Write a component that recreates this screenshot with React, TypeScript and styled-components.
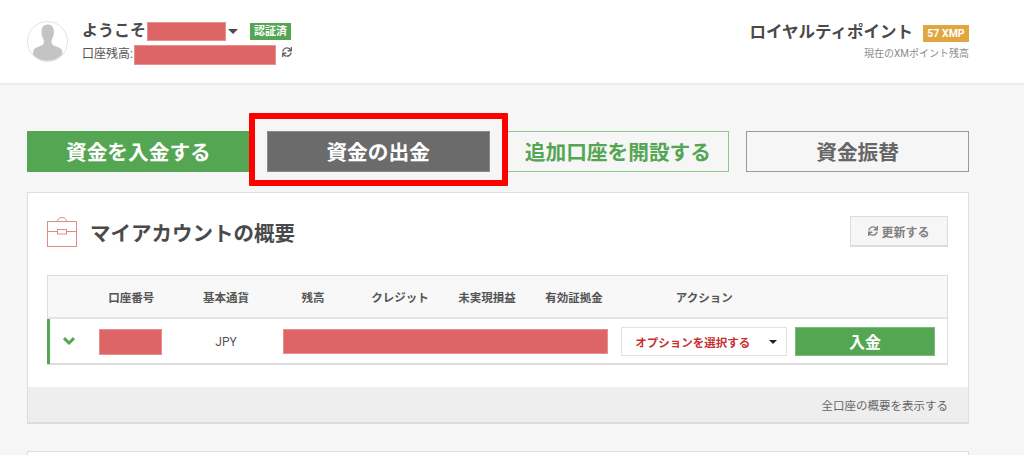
import React from "react"
import styled, { createGlobalStyle } from "styled-components"
import { FaSync } from "react-icons/fa"

const GlobalStyle = createGlobalStyle`
    html, body {
        margin: 0;
        height: 455px;
        overflow: hidden;
        background: #f6f6f6;
        font-family: Roboto, "Noto Sans CJK JP", "Liberation Sans", sans-serif;
        color: #4a4a4a;
    }
    * { box-sizing: border-box; }
`

const Header = styled.header`
    height: 85px;
    background: #fff;
    border-bottom: 2px solid #ececec;
    display: flex;
    justify-content: space-between;
    padding: 21px 55px 0 27px;
`

const User = styled.div`
    display: flex;
    gap: 14px;
`

const Avatar = styled.svg`
    width: 41px;
    height: 41px;
    display: block;
`

const UserLines = styled.div`
    display: flex;
    flex-direction: column;
    gap: 4px;
`

const Line = styled.div`
    display: flex;
    align-items: center;
`

const Welcome = styled.span`
    font-size: 16px;
    line-height: 20px;
    font-weight: 700;
    margin-right: 1px;
`

const Redacted = styled.div<{ $w: number; $h: number }>`
    width: ${(p) => p.$w}px;
    height: ${(p) => p.$h}px;
    background: #dd6565;
    border: 1px solid #e88f8f;
    flex-shrink: 0;
`

const Caret = styled.span<{ $color?: string }>`
    width: 0;
    height: 0;
    border-left: 5px solid transparent;
    border-right: 5px solid transparent;
    border-top: 5px solid ${(p) => p.$color || "#4a4a4a"};
`

const UserCaret = styled(Caret)`
    margin: 0 12px 0 2px;
`

const VerifiedBadge = styled.span`
    width: 41px;
    height: 17px;
    background: #55a653;
    color: #fff;
    font-size: 11px;
    font-weight: 700;
    line-height: 17px;
    text-align: center;
`

const BalanceLabel = styled.span`
    font-size: 12px;
    line-height: 18px;
    width: 52px;
    color: #555;
    align-self: flex-start;
`

const BalanceRefresh = styled(FaSync)`
    width: 10px;
    height: 10px;
    color: #666;
    margin-left: 6px;
    margin-top: -6px;
`

const Loyalty = styled.div`
    display: flex;
    flex-direction: column;
    align-items: flex-end;
    padding-top: 3px;
`

const LoyaltyTitle = styled.div`
    display: flex;
    align-items: center;
    gap: 10px;
    font-size: 16.5px;
    line-height: 18px;
    font-weight: 700;
`

const PointsBadge = styled.span`
    width: 46px;
    height: 17px;
    background: #dfa641;
    color: #fff;
    font-size: 10.5px;
    font-weight: 700;
    line-height: 17px;
    text-align: center;
`

const LoyaltySub = styled.div`
    font-size: 10px;
    line-height: 14px;
    color: #8c8c8c;
    margin-top: 5px;
`

const Main = styled.main`
    padding: 46px 55px 0 27px;
`

const ButtonRow = styled.div`
    position: relative;
    display: grid;
    grid-template-columns: repeat(4, 1fr);
    gap: 17px;
`

const BigButton = styled.button<{ $variant: "green" | "gray" | "greenLine" | "grayLine" }>`
    height: 41px;
    padding: 0 0 2px;
    font-family: inherit;
    font-size: 20.7px;
    font-weight: 700;
    cursor: pointer;
    background: ${(p) =>
        p.$variant === "green" ? "#55a653" : p.$variant === "gray" ? "#6b6b6b" : "transparent"};
    color: ${(p) =>
        p.$variant === "green" || p.$variant === "gray" ? "#fff" : p.$variant === "greenLine" ? "#55a653" : "#666"};
    border: 1px solid
        ${(p) =>
            p.$variant === "green"
                ? "#55a653"
                : p.$variant === "gray"
                  ? "#8a8a8a"
                  : p.$variant === "greenLine"
                    ? "#8fc58e"
                    : "#999"};
`

const Highlight = styled.div`
    position: absolute;
    left: 222px;
    top: -18px;
    width: 259px;
    height: 73px;
    border: 6px solid #ff0000;
    border-radius: 1px;
    pointer-events: none;
`

const Panel = styled.section`
    margin-top: 20px;
    height: 232px;
    background: #fff;
    border: 1px solid #ddd;
    border-bottom-width: 2px;
    display: flex;
    flex-direction: column;
`

const PanelHead = styled.div`
    display: flex;
    justify-content: space-between;
    align-items: center;
    height: 31px;
    margin: 23px 20px 0 19px;
`

const PanelTitle = styled.h2`
    display: flex;
    align-items: center;
    gap: 13px;
    margin: 0;
    font-size: 20.5px;
    font-weight: 700;
`

const CaseIcon = styled.svg`
    width: 30px;
    height: 30px;
    display: block;
`

const UpdateButton = styled.button`
    width: 98px;
    height: 31px;
    display: flex;
    align-items: center;
    justify-content: center;
    gap: 3px;
    padding: 0;
    background: #f6f6f6;
    border: 1px solid #dcdcdc;
    border-width: 1px 1px 2px 1px;
    color: #808080;
    font-family: inherit;
    font-size: 12px;
    font-weight: 700;
    svg {
        width: 10px;
        height: 10px;
    }
`

const Table = styled.div`
    margin: 28px 20px 0 19px;
    height: 90px;
    border: 1px solid #ddd;
    border-bottom-width: 2px;
`

const HeadRow = styled.div`
    height: 43px;
    background: #f8f8f8;
    border-bottom: 2px solid #e4e4e4;
    display: grid;
    grid-template-columns: 32px 102.5px repeat(5, 87px) 173.5px 1fr;
    align-items: center;
    text-align: center;
    font-size: 11.5px;
    font-weight: 700;
    color: #555;
`

const DataRow = styled.div`
    height: 45px;
    margin-left: -1px;
    border-left: 3px solid #55a653;
    display: grid;
    grid-template-columns: 30px 102.5px repeat(5, 87px) 173.5px 1fr;
    align-items: center;
    font-size: 12px;
    color: #555;
`

const Chevron = styled.svg`
    width: 12px;
    height: 8px;
    display: block;
    margin-left: 13px;
    margin-top: -1px;
`

const AccountCell = styled.div`
    padding-left: 19px;
`

const CurrencyCell = styled.div`
    text-align: center;
`

const WideCell = styled.div`
    grid-column: span 4;
    padding-left: 13px;
`

const Select = styled.div`
    width: 166px;
    height: 29px;
    justify-self: center;
    background: #fff;
    border: 1px solid #e2e2e2;
    display: flex;
    align-items: center;
    justify-content: space-between;
    padding: 0 9px 0 13px;
    color: #c93030;
    font-size: 11.5px;
    font-weight: 700;
`

const SelectCaret = styled(Caret)`
    border-left-width: 4px;
    border-right-width: 4px;
    border-top-width: 4px;
`

const DepositButton = styled.button`
    width: 140px;
    height: 29px;
    margin-left: 4px;
    padding: 0 0 2px;
    background: #55a653;
    border: 1px solid #7abb78;
    color: #fff;
    font-family: inherit;
    font-size: 16px;
    font-weight: 700;
`

const PanelFoot = styled.div`
    margin-top: auto;
    height: 35px;
    background: #eeeeee;
    display: flex;
    align-items: center;
    justify-content: flex-end;
    padding-right: 20px;
    font-size: 11.5px;
    color: #666;
`

const NextPanel = styled.section`
    margin-top: 27px;
    height: 4px;
    background: #fff;
    border: 1px solid #ddd;
    border-bottom: 0;
`

const columns = ["", "口座番号", "基本通貨", "残高", "クレジット", "未実現損益", "有効証拠金", "アクション", ""]

function App() {
    return (
        <>
            <GlobalStyle />
            <Header>
                <User>
                    <Avatar viewBox="0 0 41 41">
                        <defs>
                            <clipPath id="avatarClip">
                                <circle cx="20.5" cy="20.5" r="19.5" />
                            </clipPath>
                        </defs>
                        <circle cx="20.5" cy="20.5" r="20" fill="#fff" stroke="#e2e2e2" />
                        <g clipPath="url(#avatarClip)" fill="#c4c4c4">
                            <path d="M20.5 3.5c-4 0-6 3-6 7.500 0 2.500.6 5 1.700 6.800.5.900.7 1.800.7 3.200 0 2-1 3-3 3.800-3.300 1.300-6 2.200-7.200 4-.8 1.500-1 5-1 11h30c0-6-.2-9.500-1-11-1.200-1.800-3.900-2.700-7.200-4-2-.8-3-1.800-3-3.800 0-1.400.2-2.300.7-3.200 1.100-1.800 1.700-4.300 1.700-6.800 0-4.500-2-7.500-6-7.500z" />
                        </g>
                    </Avatar>
                    <UserLines>
                        <Line>
                            <Welcome>ようこそ</Welcome>
                            <Redacted $w={79} $h={19} />
                            <UserCaret />
                            <VerifiedBadge>認証済</VerifiedBadge>
                        </Line>
                        <Line>
                            <BalanceLabel>口座残高:</BalanceLabel>
                            <Redacted $w={142} $h={20} />
                            <BalanceRefresh />
                        </Line>
                    </UserLines>
                </User>
                <Loyalty>
                    <LoyaltyTitle>
                        ロイヤルティポイント
                        <PointsBadge>57 XMP</PointsBadge>
                    </LoyaltyTitle>
                    <LoyaltySub>現在のXMポイント残高</LoyaltySub>
                </Loyalty>
            </Header>
            <Main>
                <ButtonRow>
                    <BigButton $variant="green">資金を入金する</BigButton>
                    <BigButton $variant="gray">資金の出金</BigButton>
                    <BigButton $variant="greenLine">追加口座を開設する</BigButton>
                    <BigButton $variant="grayLine">資金振替</BigButton>
                    <Highlight />
                </ButtonRow>
                <Panel>
                    <PanelHead>
                        <PanelTitle>
                            <CaseIcon viewBox="0 0 30 30" fill="none" stroke="#e08a85" strokeWidth="1">
                                <rect x="0.5" y="4.500" width="29" height="25" />
                                <path d="M0.500 14.500h10M19.500 14.500h10" />
                                <rect x="10.500" y="12.500" width="9" height="4.500" />
                                <path d="M10.500 4.500c0-2.500 2-4 4.500-4s4.500 1.500 4.500 4" />
                            </CaseIcon>
                            マイアカウントの概要
                        </PanelTitle>
                        <UpdateButton>
                            <FaSync />
                            更新する
                        </UpdateButton>
                    </PanelHead>
                    <Table>
                        <HeadRow>
                            {columns.map((c, i) => (
                                <div key={i}>{c}</div>
                            ))}
                        </HeadRow>
                        <DataRow>
                            <Chevron viewBox="0 0 12 8" fill="none" stroke="#55a653" strokeWidth="3">
                                <path d="M1 1.200l5 4.800 5-4.800" />
                            </Chevron>
                            <AccountCell>
                                <Redacted $w={63} $h={26} />
                            </AccountCell>
                            <CurrencyCell>JPY</CurrencyCell>
                            <WideCell>
                                <Redacted $w={325} $h={25} />
                            </WideCell>
                            <Select>
                                オプションを選択する
                                <SelectCaret $color="#222" />
                            </Select>
                            <DepositButton>入金</DepositButton>
                        </DataRow>
                    </Table>
                    <PanelFoot>全口座の概要を表示する</PanelFoot>
                </Panel>
                <NextPanel />
            </Main>
        </>
    )
}

export default App
